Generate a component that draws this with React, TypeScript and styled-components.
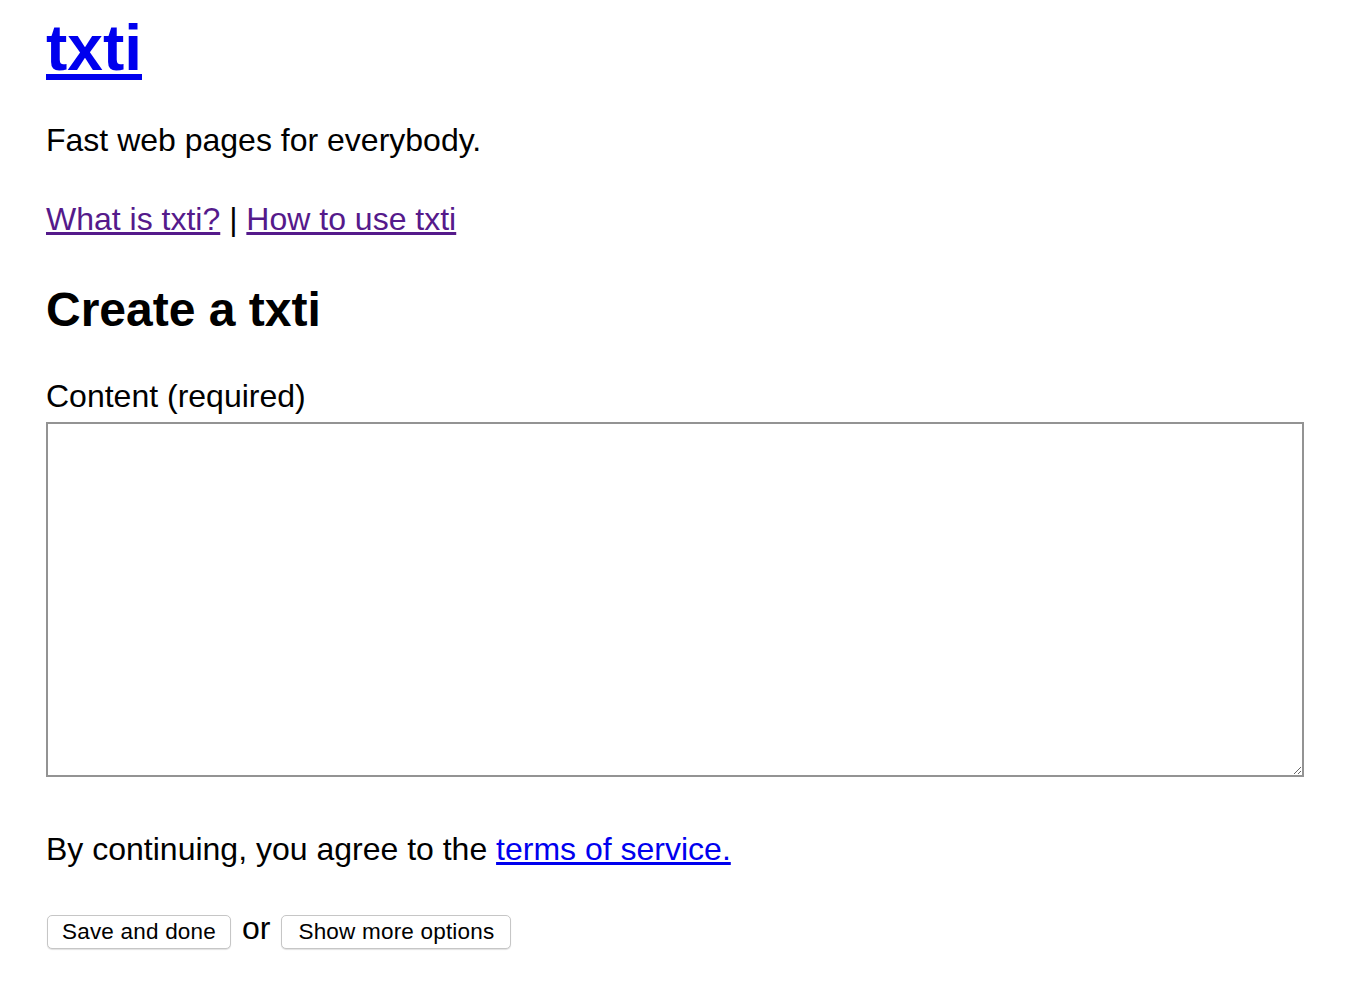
import React, { useState } from 'react';
import styled, { createGlobalStyle } from 'styled-components';

const GlobalStyle = createGlobalStyle`
  html, body {
    margin: 0;
    padding: 0;
    background: #ffffff;
  }
  body {
    font-family: "Liberation Sans", Arial, Helvetica, sans-serif;
    color: #000000;
  }
`;

const Page = styled.main`
  padding: 0 44px 40px 46px;
  font-size: 32px;
  line-height: 36px;
`;

const Title = styled.h1`
  margin: 11px 0 0;
  font-size: 64px;
  line-height: 74px;
  font-weight: bold;
`;

const TitleLink = styled.a`
  color: #0000ee;
  text-decoration: underline;
`;

const Tagline = styled.p`
  margin: 37px 0 0;
`;

const NavLine = styled.p`
  margin: 43px 0 0;
`;

const NavLink = styled.a<{ $visited?: boolean }>`
  color: ${(p) => (p.$visited ? '#551a8b' : '#0000ee')};
  text-decoration: underline;
`;

const Heading = styled.h2`
  margin: 45px 0 0;
  font-size: 48px;
  line-height: 56px;
  font-weight: bold;
`;

const Form = styled.form`
  display: flex;
  flex-direction: column;
`;

const Label = styled.label`
  display: block;
  margin: 40px 0 8px;
`;

const ContentArea = styled.textarea`
  box-sizing: border-box;
  width: 1258px;
  height: 355px;
  margin: 0;
  border: 2px solid #939393;
  padding: 2px;
  font-family: "Liberation Mono", monospace;
  font-size: 16px;
  resize: both;
  outline: none;
`;

const Terms = styled.p`
  margin: 54px 0 0;
`;

const Actions = styled.div`
  display: flex;
  align-items: baseline;
  gap: 11px;
  margin-top: 43px;
`;

const Or = styled.span`
  font-size: 32px;
  line-height: 36px;
`;

const Button = styled.button<{ $pad?: number }>`
  box-sizing: border-box;
  margin-left: 1px;
  height: 34px;
  padding: 4px ${(p) => p.$pad ?? 14}px;
  font-family: "Liberation Sans", Arial, sans-serif;
  font-size: 22.5px;
  line-height: 24px;
  letter-spacing: 0.2px;
  color: #000000;
  background: #ffffff;
  border: 1px solid #c6c6c6;
  border-radius: 5px;
  box-shadow: 0 1px 1px rgba(0, 0, 0, 0.12);
  cursor: pointer;
  & + span + & {
    margin-left: 0;
  }
`;

export default function App() {
  const [content, setContent] = useState('');

  return (
    <>
      <GlobalStyle />
      <Page>
        <Title>
          <TitleLink href="#">txti</TitleLink>
        </Title>
        <Tagline>Fast web pages for everybody.</Tagline>
        <NavLine>
          <NavLink $visited href="#about">What is txti?</NavLink> |{' '}
          <NavLink $visited href="#how">How to use txti</NavLink>
        </NavLine>
        <Heading>Create a txti</Heading>
        <Form onSubmit={(e) => e.preventDefault()}>
          <Label htmlFor="content">Content (required)</Label>
          <ContentArea
            id="content"
            value={content}
            onChange={(e) => setContent(e.target.value)}
          />
          <Terms>
            By continuing, you agree to the <NavLink href="#terms">terms of service.</NavLink>
          </Terms>
          <Actions>
            <Button type="submit">Save and done</Button>
            <Or>or</Or>
            <Button type="button" $pad={16}>Show more options</Button>
          </Actions>
        </Form>
      </Page>
    </>
  );
}
